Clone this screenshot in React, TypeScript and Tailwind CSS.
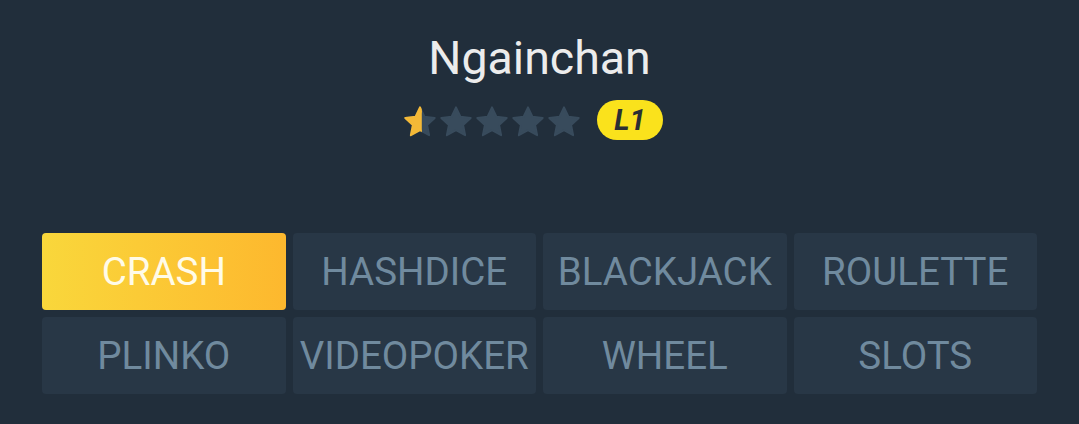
import React from "react";

const STAR = "M12 2.2l2.95 6.3 6.85.8-5.06 4.7 1.36 6.8L12 17.4l-6.1 3.4 1.36-6.8L2.2 9.3l6.85-.8z";

function Star({ fill }: { fill: number }) {
  const id = React.useId();
  return (
    <svg width="36" height="36" viewBox="0 0 24 24" className="block">
      <defs>
        <clipPath id={id}>
          <rect x="0" y="0" width={24 * fill} height="24" />
        </clipPath>
      </defs>
      <path d={STAR} fill="#384b5c" stroke="#384b5c" strokeWidth="1.3" strokeLinejoin="round" />
      {fill > 0 && (
        <path d={STAR} fill="#f4b937" stroke="#f4b937" strokeWidth="1.3" strokeLinejoin="round" clipPath={`url(#${id})`} />
      )}
    </svg>
  );
}

const games = ["CRASH", "HASHDICE", "BLACKJACK", "ROULETTE", "PLINKO", "VIDEOPOKER", "WHEEL", "SLOTS"];

export default function App() {
  return (
    <div
      className="w-[1079px] h-[424px] bg-[#212e3b] flex flex-col items-center"
      style={{ fontFamily: "Roboto, 'Noto Sans', sans-serif" }}
    >
      <div className="mt-[29px] text-[46.5px] leading-[58px] text-[#ececec]">Ngainchan</div>
      <div className="mt-[17px] mr-[14px] flex items-center">
        <div className="flex">
          <Star fill={0.55} />
          <Star fill={0} />
          <Star fill={0} />
          <Star fill={0} />
          <Star fill={0} />
        </div>
        <div className="ml-[15px] -mt-[4px] w-[66px] h-[40px] rounded-full bg-[#fae21c] flex items-center justify-center text-[#2a2f33] text-[29px] font-bold italic leading-none">
          L1
        </div>
      </div>
      <div className="mt-[93px] w-[995px] grid grid-cols-4 gap-[7px]">
        {games.map((g, i) => (
          <div
            key={g}
            className={
              i === 0
                ? "h-[77px] rounded-[4px] bg-gradient-to-r from-[#f9d73b] to-[#fdb82e] flex items-center justify-center text-[38.5px] text-[#fffbe8]"
                : "h-[77px] rounded-[4px] bg-[#283746] flex items-center justify-center text-[38.5px] text-[#708a9e]"
            }
          >
            {g}
          </div>
        ))}
      </div>
    </div>
  );
}
